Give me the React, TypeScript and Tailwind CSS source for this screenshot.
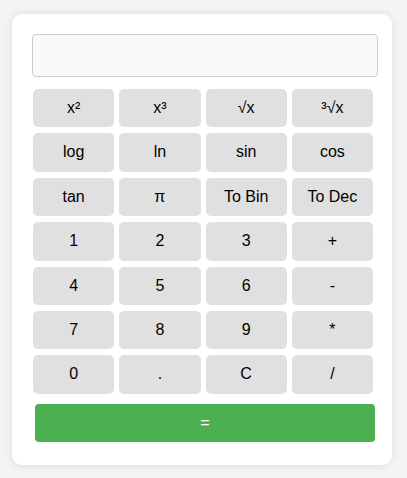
import React from "react";

const rows: string[] = [
  "x²", "x³", "√x", "³√x",
  "log", "ln", "sin", "cos",
  "tan", "π", "To Bin", "To Dec",
  "1", "2", "3", "+",
  "4", "5", "6", "-",
  "7", "8", "9", "*",
  "0", ".", "C", "/",
];

export default function App() {
  return (
    <div
      className="min-h-[478px] w-full bg-[#f4f4f4] pt-[14px] pl-[12px] pb-[13px]"
      style={{ fontFamily: '"Liberation Sans", Arial, sans-serif' }}
    >
      <div className="w-[380px] bg-white rounded-[10px] shadow-[0_0_10px_rgba(0,0,0,0.1)] pt-[20px] pb-[23px] pl-[20px]">
        <input
          type="text"
          readOnly
          className="block w-[346px] h-[43px] bg-[#f9f9f9] border border-[#cccccc] rounded-[4px] outline-none"
        />
        <div className="mt-[12px] ml-[1px] w-[340px] grid grid-cols-4 gap-x-[5px] gap-y-[6px]">
          {rows.map((b) => (
            <button
              key={b}
              className="bg-[#e0e0e0] rounded-[5px] py-[10px] text-[16px] leading-[18.4px] text-black text-center"
            >
              {b}
            </button>
          ))}
        </div>
        <button className="mt-[10px] ml-[3px] block w-[340px] h-[38px] bg-[#4caf50] rounded-[4px] text-white text-[16px]">
          =
        </button>
      </div>
    </div>
  );
}
